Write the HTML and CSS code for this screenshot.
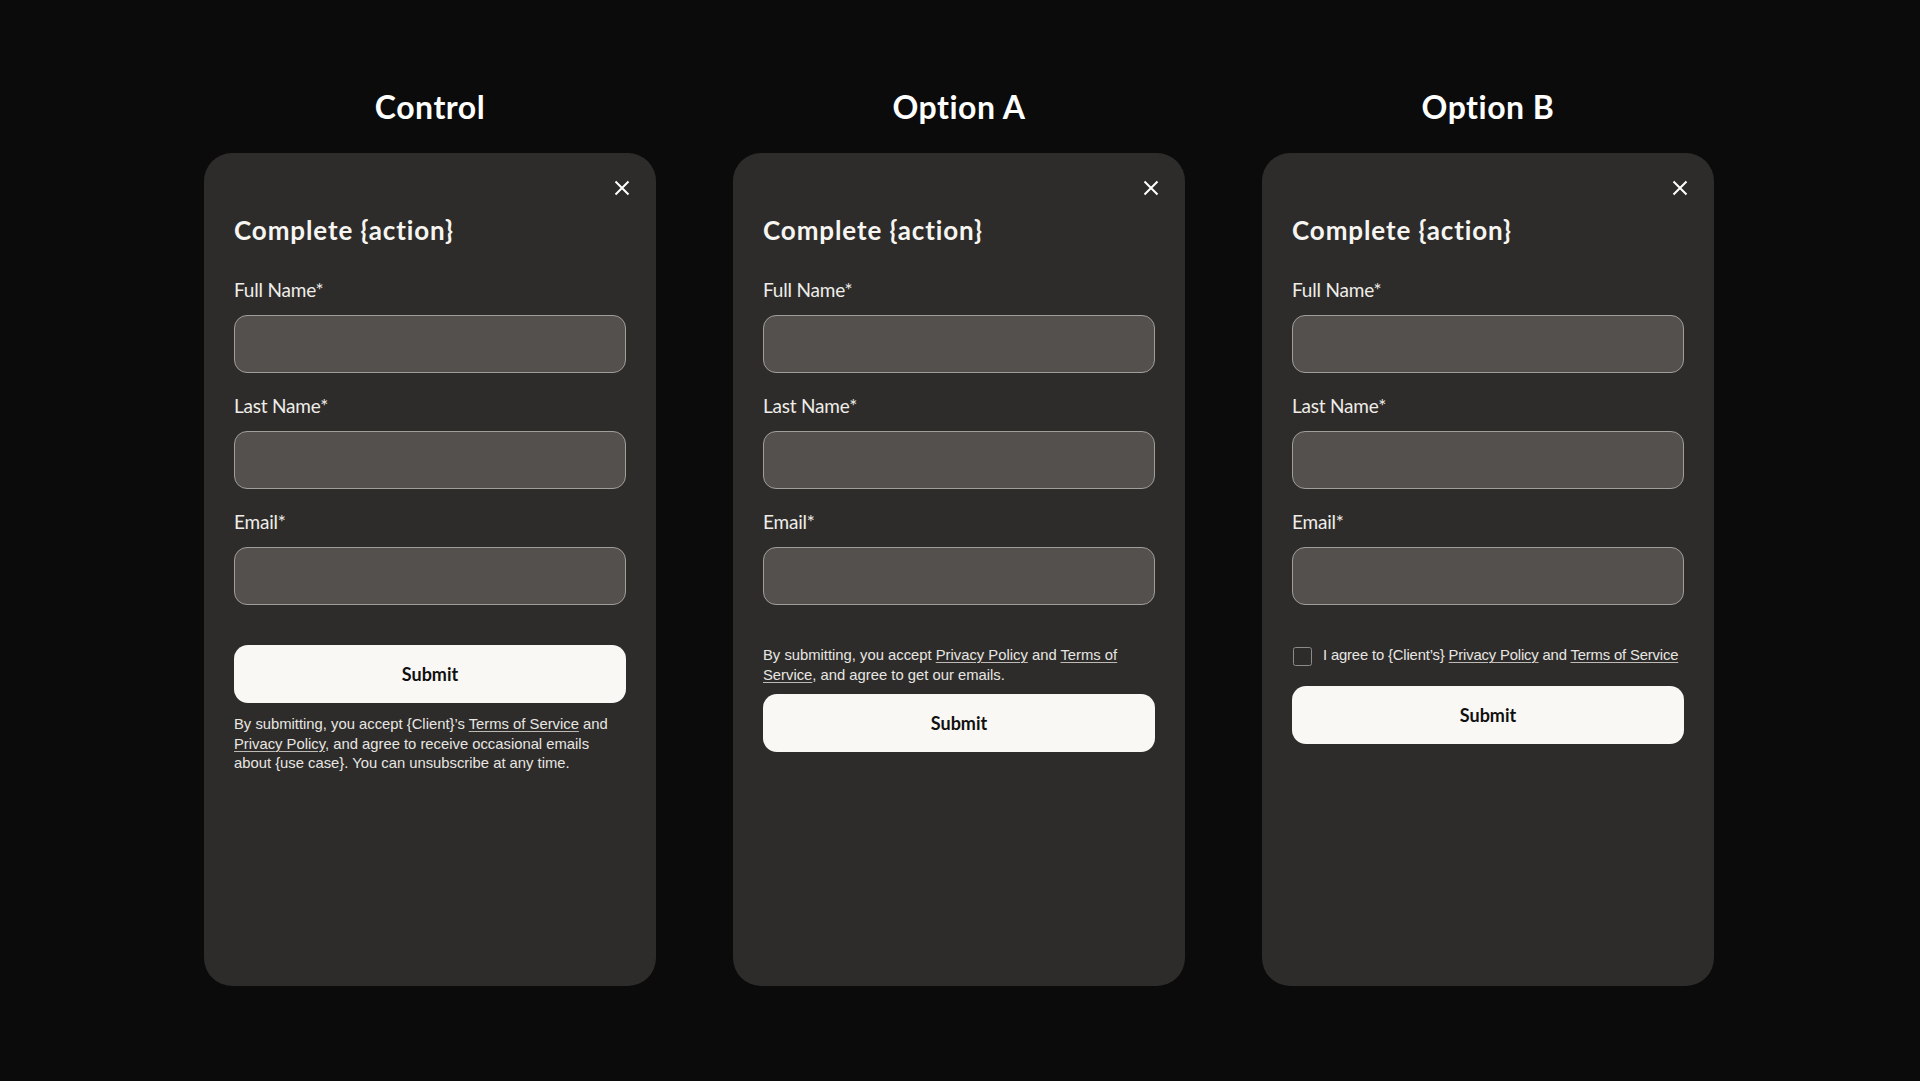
FILE: index.html
```html
<!DOCTYPE html>
<html lang="en">
<head>
<meta charset="utf-8">
<title>Consent variants</title>
<link rel="stylesheet" href="styles.css">
</head>
<body>
<main class="board">
  <section class="col">
    <h2 class="variant">Control</h2>
    <div class="card">
      <div class="card-top">
        <button class="close" aria-label="Close"><svg width="16" height="16" viewBox="0 0 16 16"><path d="M1.5 1.5L14.5 14.5M14.5 1.5L1.5 14.5" stroke="#fff" stroke-width="2" fill="none"/></svg></button>
      </div>
      <h3 class="title">Complete {action}</h3>
      <div class="field first"><label>Full Name*</label><div class="input"></div></div>
      <div class="field"><label>Last Name*</label><div class="input"></div></div>
      <div class="field"><label>Email*</label><div class="input"></div></div>
      <button class="submit submit-control">Submit</button>
      <p class="legal legal-control">By submitting, you accept {Client}’s <a>Terms of Service</a> and <a>Privacy Policy</a>, and agree to receive occasional emails about {use case}. You can unsubscribe at any time.</p>
    </div>
  </section>
  <section class="col">
    <h2 class="variant">Option A</h2>
    <div class="card">
      <div class="card-top">
        <button class="close" aria-label="Close"><svg width="16" height="16" viewBox="0 0 16 16"><path d="M1.5 1.5L14.5 14.5M14.5 1.5L1.5 14.5" stroke="#fff" stroke-width="2" fill="none"/></svg></button>
      </div>
      <h3 class="title">Complete {action}</h3>
      <div class="field first"><label>Full Name*</label><div class="input"></div></div>
      <div class="field"><label>Last Name*</label><div class="input"></div></div>
      <div class="field"><label>Email*</label><div class="input"></div></div>
      <p class="legal legal-a">By submitting, you accept <a>Privacy Policy</a> and <a>Terms of Service</a>, and agree to get our emails.</p>
      <button class="submit submit-a">Submit</button>
    </div>
  </section>
  <section class="col">
    <h2 class="variant">Option B</h2>
    <div class="card">
      <div class="card-top">
        <button class="close" aria-label="Close"><svg width="16" height="16" viewBox="0 0 16 16"><path d="M1.5 1.5L14.5 14.5M14.5 1.5L1.5 14.5" stroke="#fff" stroke-width="2" fill="none"/></svg></button>
      </div>
      <h3 class="title">Complete {action}</h3>
      <div class="field first"><label>Full Name*</label><div class="input"></div></div>
      <div class="field"><label>Last Name*</label><div class="input"></div></div>
      <div class="field"><label>Email*</label><div class="input"></div></div>
      <div class="agree"><span class="checkbox"></span><span class="legal agree-text">I agree to {Client’s} <a>Privacy Policy</a> and <a>Terms of Service</a></span></div>
      <button class="submit submit-b">Submit</button>
    </div>
  </section>
</main>
</body>
</html>
```
FILE: styles.css
```css
* { box-sizing: border-box; }
html, body { margin: 0; padding: 0; }
body {
  background: #0b0b0b;
  color: #f4f2ee;
  font-family: Lato, "Noto Sans", sans-serif;
  height: 1081px;
  overflow: hidden;
}
.board {
  display: flex;
  justify-content: center;
  gap: 77px;
  padding-top: 87px;
  padding-right: 2px;
}
.col {
  display: flex;
  flex-direction: column;
  align-items: center;
}
.variant {
  margin: 0;
  font-size: 32px;
  line-height: 40px;
  font-weight: 700;
  letter-spacing: 0.5px;
  color: #ffffff;
}
.card {
  margin-top: 26px;
  width: 452px;
  height: 833px;
  background: #2d2c2a;
  border-radius: 28px;
  padding: 23px 30px 0;
  display: flex;
  flex-direction: column;
}
.card-top {
  display: flex;
  justify-content: flex-end;
  margin-right: -8px;
}
.close {
  width: 24px;
  height: 24px;
  padding: 0;
  border: 0;
  background: none;
  display: flex;
  align-items: center;
  justify-content: center;
}
.title {
  margin: 14px 0 0;
  font-size: 26px;
  line-height: 32px;
  font-weight: 700;
  letter-spacing: 0.9px;
  color: #f7f5f1;
}
.field {
  display: flex;
  flex-direction: column;
  margin-top: 21px;
}
.field.first { margin-top: 32px; }
.field label {
  font-size: 19px;
  line-height: 24px;
  font-weight: 400;
  letter-spacing: -0.2px;
  color: #efede9;
}
.input {
  margin-top: 13px;
  height: 58px;
  background: #53504d;
  border: 1px solid #a19e9a;
  border-radius: 13px;
}
.submit {
  height: 58px;
  width: 100%;
  border: 0;
  border-radius: 14px;
  background: #f9f8f4;
  color: #111;
  font-family: Lato, "Noto Sans", sans-serif;
  font-size: 18px;
  font-weight: 700;
}
.submit-control { margin-top: 40px; }
.submit-a { margin-top: 9px; }
.submit-b { margin-top: 20px; }
.legal {
  margin: 0;
  font-family: "Liberation Sans", Arial, sans-serif;
  font-size: 14.8px;
  line-height: 19.6px;
  color: #e8e6e2;
}
.legal a {
  text-decoration: underline;
  text-underline-offset: 2px;
  text-decoration-thickness: 1px;
  text-decoration-color: #bdbab6;
}
.legal-control { margin-top: 12px; }
.legal-a { margin-top: 41px; }
.agree {
  margin-top: 41px;
  display: flex;
  align-items: center;
  gap: 11px;
  height: 20px;
  padding-left: 1px;
}
.agree-text {
  white-space: nowrap;
  letter-spacing: -0.15px;
}
.checkbox {
  width: 19px;
  height: 19px;
  border: 1.5px solid #8e8b87;
  border-radius: 2.5px;
  flex: none;
}
```
